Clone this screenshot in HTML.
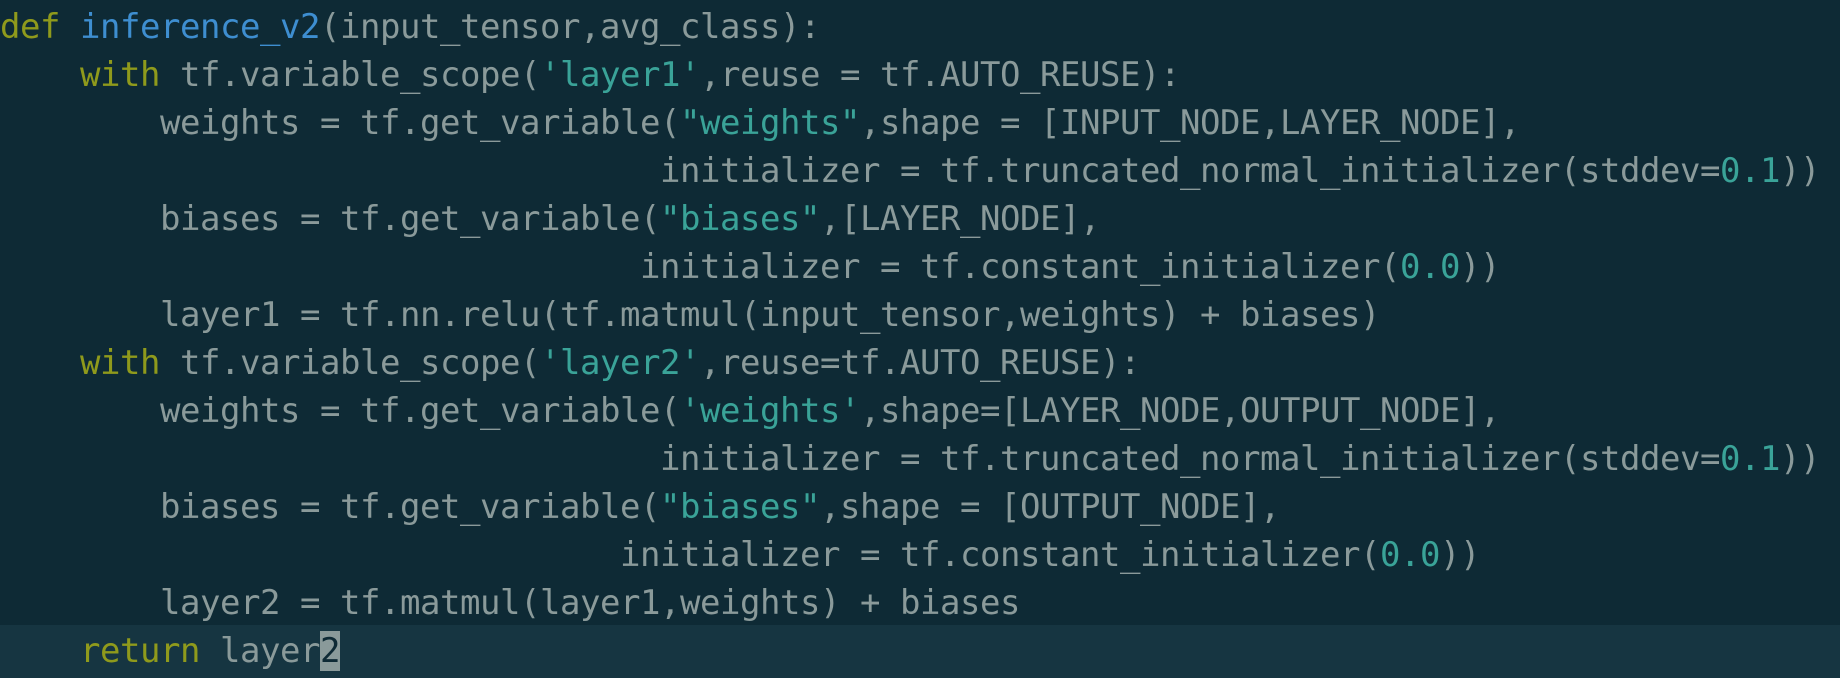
<!DOCTYPE html>
<html><head><meta charset="utf-8"><style>
html,body{margin:0;padding:0;width:1840px;height:678px;overflow:hidden;background:#0e2a35;}
pre{margin:0;position:absolute;left:0;top:3px;font-family:"DejaVu Sans Mono",monospace;font-size:34px;letter-spacing:-0.47px;line-height:48px;color:#8a9a9a;}
.k{color:#8f9a1c}.f{color:#3e8ed0}.s{color:#3aa398}
.hl{position:absolute;left:0;top:625px;width:1840px;height:53px;background:#163541;}
.cur{background:#8a9a9a;color:#0e2a35;}
</style></head><body>
<div class="hl"></div>
<pre><span class="k">def</span> <span class="f">inference_v2</span>(input_tensor,avg_class):
    <span class="k">with</span> tf.variable_scope(<span class="s">'layer1'</span>,reuse = tf.AUTO_REUSE):
        weights = tf.get_variable(<span class="s">"weights"</span>,shape = [INPUT_NODE,LAYER_NODE],
                                 initializer = tf.truncated_normal_initializer(stddev=<span class="s">0.1</span>))
        biases = tf.get_variable(<span class="s">"biases"</span>,[LAYER_NODE],
                                initializer = tf.constant_initializer(<span class="s">0.0</span>))
        layer1 = tf.nn.relu(tf.matmul(input_tensor,weights) + biases)
    <span class="k">with</span> tf.variable_scope(<span class="s">'layer2'</span>,reuse=tf.AUTO_REUSE):
        weights = tf.get_variable(<span class="s">'weights'</span>,shape=[LAYER_NODE,OUTPUT_NODE],
                                 initializer = tf.truncated_normal_initializer(stddev=<span class="s">0.1</span>))
        biases = tf.get_variable(<span class="s">"biases"</span>,shape = [OUTPUT_NODE],
                               initializer = tf.constant_initializer(<span class="s">0.0</span>))
        layer2 = tf.matmul(layer1,weights) + biases
    <span class="k">return</span> layer<span class="cur">2</span></pre>
</body></html>
